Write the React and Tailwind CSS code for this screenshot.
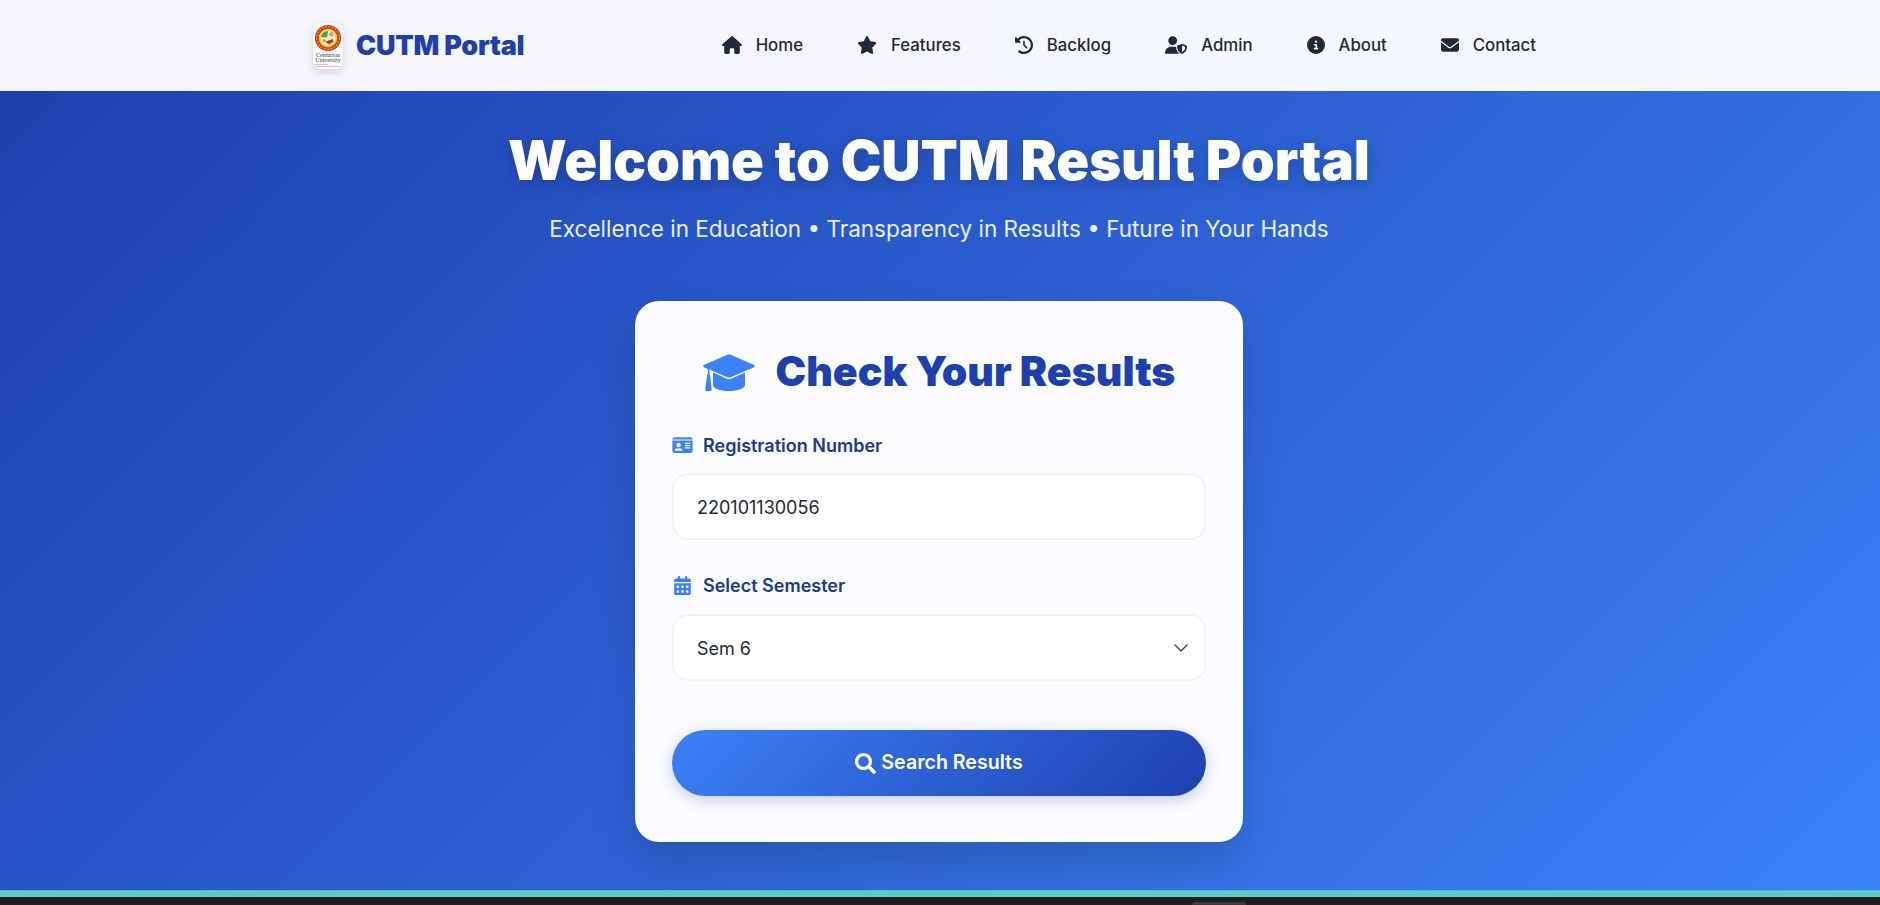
import { useState } from "react";
import { FaSearch } from "react-icons/fa";
import { FaHouse, FaStar, FaClockRotateLeft, FaUserShield, FaCircleInfo, FaEnvelope, FaIdCard, FaCalendarDays } from "react-icons/fa6";

const links = [
  { label: "Home", icon: FaHouse, width: "w-[20px]" },
  { label: "Features", icon: FaStar, width: "w-[20px]" },
  { label: "Backlog", icon: FaClockRotateLeft, width: "w-[18px]" },
  { label: "Admin", icon: FaUserShield, width: "w-[22px]" },
  { label: "About", icon: FaCircleInfo, width: "w-[18px]" },
  { label: "Contact", icon: FaEnvelope, width: "w-[18px]" },
];

const Logo = () => (
  <div className="flex h-[46px] w-[30px] flex-col items-center rounded-lg bg-[#fafafa] shadow-[0_3px_8px_rgba(0,0,0,0.15)]">
    <svg viewBox="0 0 30 30" className="mt-px h-[28px] w-[28px]">
      <circle cx="15" cy="15" r="14" fill="#d43a1f" />
      <circle cx="15" cy="15" r="12.2" fill="none" stroke="#eeb21e" strokeWidth="1.2" strokeDasharray="2 1.6" />
      <circle cx="15" cy="15" r="10" fill="#f0d530" />
      <circle cx="15" cy="15" r="8" fill="#e9efd4" />
      <path d="M7.5 14a7.5 7.5 0 0 1 7.5-6.5l-1 7z" fill="#4f9f50" />
      <path d="M12 19l8-3 1 3-5 3z" fill="#c8322b" />
      <circle cx="18.5" cy="11" r="2.4" fill="#a6abaf" />
      <circle cx="11" cy="18" r="1.8" fill="#e5a51c" />
    </svg>
    <span className="mt-px text-[6px] leading-[5px] text-[#444] [font-family:'Liberation_Serif',serif]">Centurion</span>
    <span className="text-[6px] leading-[5px] text-[#444] [font-family:'Liberation_Serif',serif]">University</span>
    <span className="mt-px ml-px h-px w-[14px] self-start bg-[#eeb6b6]" />
    <span className="mt-px h-px w-[24px] bg-[#eeb6b6]" />
  </div>
);

const GradCap = () => (
  <svg viewBox="0 0 52 37" className="h-[37px] w-[52px] text-[#3b82f6]" fill="currentColor">
    <path d="M25 .4a3 3 0 0 1 2 0l23.6 10.4c1.6.7 1.6 1.9 0 2.6L27 23.6a3 3 0 0 1-2 0L6.4 15.6v4.6H4.8v-5.3L1.4 13.4c-1.6-.7-1.6-1.9 0-2.6z" />
    <path d="M10 18.6l14.4 6.4a4 4 0 0 0 3.2 0L42 18.6V31c0 3.4-7.2 6-16 6s-16-2.6-16-6z" />
    <path d="M4.2 20.2h2.8l1.6 15.6c0 .7-.5 1.2-1.2 1.2H3.4c-.7 0-1.2-.5-1.2-1.2z" />
  </svg>
);

const Navbar = () => (
  <nav className="h-[91px] shrink-0 bg-gradient-to-r from-[#f5f6fb] to-[#f4f8ff]">
    <div className="mx-auto flex h-full w-[1254px] items-center justify-between">
      <div className="flex items-center gap-[13px]">
        <Logo />
        <span className="pt-[2px] text-[27px] font-black tracking-[-0.25px] text-[#1e40af]">CUTM Portal</span>
      </div>
      <ul className="flex items-center pr-[4px]">
        {links.map(({ label, icon: Icon, width }) => (
          <li key={label} className="flex items-center gap-[14px] px-[27px] text-[16.8px] font-medium text-[#1f2937]">
            <Icon className={`mb-[2px] h-[18px] ${width}`} />
            <span>{label}</span>
          </li>
        ))}
      </ul>
    </div>
  </nav>
);

const fieldClass =
  "h-[67px] w-full rounded-[16px] border-2 border-[#eef3fe] bg-white px-[23px] pt-[2px] text-[18px] text-[#1f2937] outline-none";

const App = () => {
  const [regNo, setRegNo] = useState("220101130056");
  const [semester, setSemester] = useState("6");

  return (
    <div className="flex h-screen flex-col overflow-hidden [font-family:Inter,sans-serif]">
      <Navbar />
      <main className="flex flex-1 flex-col items-center bg-[linear-gradient(135deg,#1e40af,#3b82f6)] pt-[29px]">
        <h1 className="mr-[2px] text-[54.3px] leading-[80px] font-black text-white [text-shadow:0_4px_15px_rgba(0,0,0,0.2)]">
          Welcome to CUTM Result Portal
        </h1>
        <p className="mt-[13px] mr-[2px] text-[22.5px] leading-[32px] text-white/90">
          Excellence in Education • Transparency in Results • Future in Your Hands
        </p>
        <div className="mt-[56px] mr-[2px] h-[541px] w-[608px] rounded-[24px] bg-[#fbfcff] px-[37px] pt-[48px] shadow-[0_20px_40px_rgba(0,0,0,0.15)]">
          <h2 className="flex h-[46px] items-center justify-center gap-[21px] text-[41px] font-black text-[#1e40af]">
            <GradCap />
            <span>Check Your Results</span>
          </h2>
          <label className="mt-[38px] flex h-[24px] items-center gap-[10px] text-[18px] font-semibold text-[#1e3a8a]">
            <FaIdCard className="h-[18px] w-[21px] text-[#3b82f6]" />
            Registration Number
          </label>
          <input
            className={`${fieldClass} mt-[16px]`}
            value={regNo}
            onChange={(e) => setRegNo(e.target.value)}
          />
          <label className="mt-[33px] flex h-[24px] items-center gap-[12px] text-[18px] font-semibold text-[#1e3a8a]">
            <FaCalendarDays className="ml-[2px] h-[19px] w-[17px] text-[#3b82f6]" />
            Select Semester
          </label>
          <div className="relative mt-[17px]">
            <select
              className={`${fieldClass} appearance-none`}
              value={semester}
              onChange={(e) => setSemester(e.target.value)}
            >
              {[1, 2, 3, 4, 5, 6, 7, 8].map((n) => (
                <option key={n} value={n}>
                  Sem {n}
                </option>
              ))}
            </select>
            <svg
              viewBox="0 0 16 16"
              className="pointer-events-none absolute top-[26px] right-[17px] h-[16px] w-[16px] text-[#374151]"
              fill="none"
              stroke="currentColor"
              strokeWidth="1.4"
              strokeLinecap="round"
              strokeLinejoin="round"
            >
              <path d="M2 5l6 6 6-6" />
            </svg>
          </div>
          <button
            type="button"
            className="mt-[49px] flex h-[66px] w-full items-center justify-center gap-[5px] rounded-full bg-[linear-gradient(135deg,#3b82f6,#1e40af)] text-[19.6px] font-semibold text-white shadow-[0_4px_15px_rgba(30,64,175,0.25)]"
          >
            <FaSearch className="h-[21px] w-[21px]" />
            Search Results
          </button>
        </div>
      </main>
      <div className="h-[7px] shrink-0 border-t border-[#58bdb9] bg-[#5ccbc5]" />
      <div className="h-[8px] shrink-0 bg-[#1e1e1e] pt-[5px] pl-[1192px]">
        <div className="h-[3px] w-[54px] rounded-t-sm bg-[#3a3a3a]" />
      </div>
    </div>
  );
};

export default App;
